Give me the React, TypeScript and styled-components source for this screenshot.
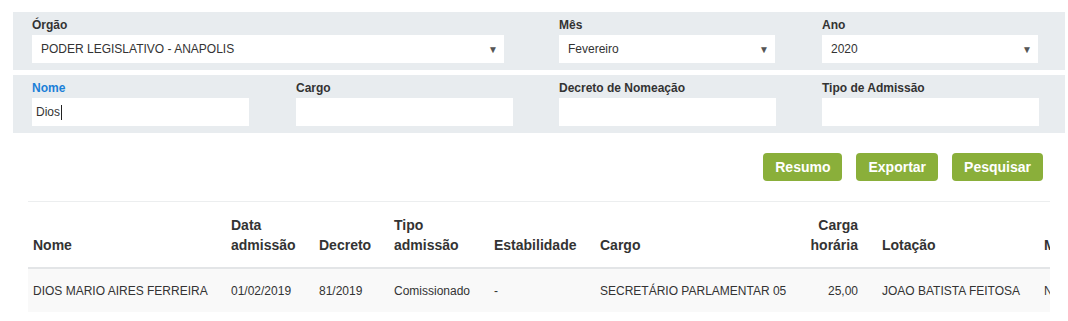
import React from "react";
import styled, {createGlobalStyle} from "styled-components";

const GlobalStyle = createGlobalStyle`
  body {
    margin: 0;
    background: #fff;
    font-family: "Liberation Sans", Arial, sans-serif;
    color: #333;
  }
`;

const Page = styled.div`
  padding: 12px 3px 0 13px;
`;

const FilterPanel = styled.div`
  background: #e8ecef;
  padding: 5px 0 7px 19px;
  margin-bottom: 5px;
  display: grid;
  grid-template-columns: 264px 263px 263px 1fr;
`;

const Field = styled.div<{span?: number}>`
  grid-column: span ${(p) => p.span || 1};
  display: flex;
  flex-direction: column;
`;

const Label = styled.label<{active?: boolean}>`
  font-size: 12px;
  font-weight: bold;
  line-height: 17px;
  margin-bottom: 1px;
  color: ${(p) => (p.active ? "#1a7fd8" : "#333")};
`;

const SelectBox = styled.div<{w: number}>`
  width: ${(p) => p.w}px;
  height: 28px;
  box-sizing: border-box;
  background: #fff;
  display: flex;
  align-items: center;
  justify-content: space-between;
  padding: 0 6px 0 9px;
  font-size: 12px;
  color: #333;
`;

const Arrow = styled.span`
  font-size: 10px;
  color: #555;
`;

const TextBox = styled.div`
  width: 217px;
  height: 28px;
  box-sizing: border-box;
  background: #fff;
  display: flex;
  align-items: center;
  padding: 0 4px;
  font-size: 12px;
  color: #333;
`;

const Caret = styled.span`
  display: inline-block;
  width: 1px;
  height: 15px;
  background: #222;
  margin-left: 1px;
`;

const ButtonRow = styled.div`
  display: flex;
  justify-content: flex-end;
  gap: 14px;
  padding: 15px 22px 0 0;
`;

const GreenButton = styled.button`
  height: 28px;
  padding: 0 12px;
  border: none;
  border-radius: 4px;
  background: #8aaf3a;
  color: #fff;
  font-family: "Liberation Sans", Arial, sans-serif;
  font-size: 14px;
  font-weight: bold;
  cursor: pointer;
`;

const TableWrap = styled.div`
  margin: 20px 0 0 15px;
  width: 1022px;
  overflow: hidden;
  border-top: 1px solid #eceeef;
`;

const Table = styled.table`
  border-collapse: collapse;
  table-layout: fixed;
  width: 1154px;
  font-size: 12px;
`;

const Th = styled.th<{right?: boolean}>`
  text-align: ${(p) => (p.right ? "right" : "left")};
  vertical-align: bottom;
  font-size: 14px;
  font-weight: bold;
  line-height: 20px;
  padding: 13px 12px 12px;
  border-bottom: 2px solid #e3e5e7;
  &:first-child {
    padding-left: 5px;
  }
`;

const Row = styled.tr`
  background: #f9f9f9;
`;

const Td = styled.td<{right?: boolean}>`
  text-align: ${(p) => (p.right ? "right" : "left")};
  white-space: nowrap;
  line-height: 17px;
  padding: 14px 12px 12px;
  &:first-child {
    padding-left: 5px;
  }
`;

const columns: {title: string; width: number; right?: boolean}[] = [
  {title: "Nome", width: 191},
  {title: "Data admissão", width: 88},
  {title: "Decreto", width: 75},
  {title: "Tipo admissão", width: 100},
  {title: "Estabilidade", width: 106},
  {title: "Cargo", width: 208},
  {title: "Carga horária", width: 74, right: true},
  {title: "Lotação", width: 162},
  {title: "Modalidade", width: 150},
];

const rows = [
  [
    "DIOS MARIO AIRES FERREIRA",
    "01/02/2019",
    "81/2019",
    "Comissionado",
    "-",
    "SECRETÁRIO PARLAMENTAR 05",
    "25,00",
    "JOAO BATISTA FEITOSA",
    "NOMEADO",
  ],
];

export default function App() {
  return (
    <Page>
      <GlobalStyle />
      <FilterPanel>
        <Field span={2}>
          <Label>Órgão</Label>
          <SelectBox w={472}>
            PODER LEGISLATIVO - ANAPOLIS
            <Arrow>▼</Arrow>
          </SelectBox>
        </Field>
        <Field>
          <Label>Mês</Label>
          <SelectBox w={216}>
            Fevereiro
            <Arrow>▼</Arrow>
          </SelectBox>
        </Field>
        <Field>
          <Label>Ano</Label>
          <SelectBox w={216}>
            2020
            <Arrow>▼</Arrow>
          </SelectBox>
        </Field>
      </FilterPanel>
      <FilterPanel>
        <Field>
          <Label active>Nome</Label>
          <TextBox>
            Dios
            <Caret />
          </TextBox>
        </Field>
        <Field>
          <Label>Cargo</Label>
          <TextBox />
        </Field>
        <Field>
          <Label>Decreto de Nomeação</Label>
          <TextBox />
        </Field>
        <Field>
          <Label>Tipo de Admissão</Label>
          <TextBox />
        </Field>
      </FilterPanel>
      <ButtonRow>
        <GreenButton>Resumo</GreenButton>
        <GreenButton>Exportar</GreenButton>
        <GreenButton>Pesquisar</GreenButton>
      </ButtonRow>
      <TableWrap>
        <Table>
          <colgroup>
            {columns.map((c) => (
              <col key={c.title} style={{width: c.width}} />
            ))}
          </colgroup>
          <thead>
            <tr>
              {columns.map((c) => (
                <Th key={c.title} right={c.right}>
                  {c.title}
                </Th>
              ))}
            </tr>
          </thead>
          <tbody>
            {rows.map((r, i) => (
              <Row key={i}>
                {r.map((v, j) => (
                  <Td key={j} right={columns[j].right}>
                    {v}
                  </Td>
                ))}
              </Row>
            ))}
          </tbody>
        </Table>
      </TableWrap>
    </Page>
  );
}
